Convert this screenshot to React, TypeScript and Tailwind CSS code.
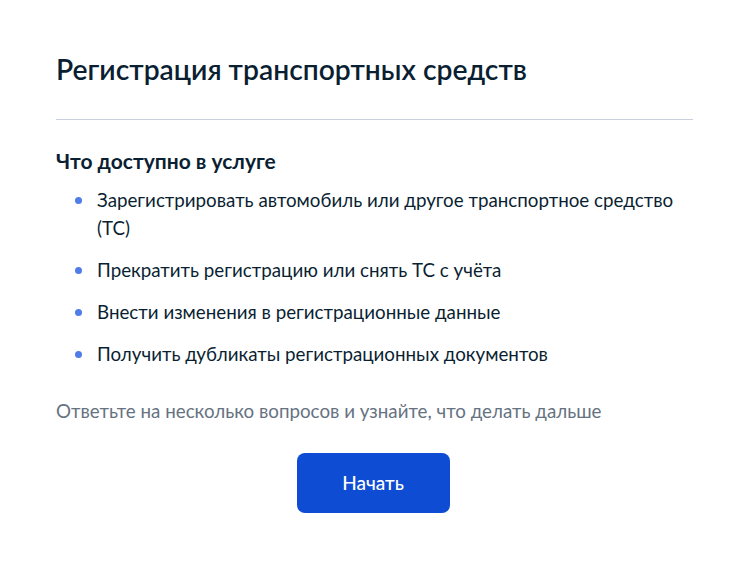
const items = [
  "Зарегистрировать автомобиль или другое транспортное средство (ТС)",
  "Прекратить регистрацию или снять ТС с учёта",
  "Внести изменения в регистрационные данные",
  "Получить дубликаты регистрационных документов",
];

export default function App() {
  return (
    <div className="min-h-[567px] w-[750px] bg-white font-['Lato',sans-serif] text-[#0b1f33]">
      <div className="px-[56px] pt-[51px]">
        {/* TITLE */}
        <h1 className="text-[28.25px] font-semibold leading-[36px]">
          Регистрация транспортных средств
        </h1>
        <div className="mt-[32px] h-px w-[637px] bg-[#c9d2dc]"></div>

        {/* SERVICES */}
        <h2 className="mt-[27px] text-[21px] font-bold leading-[28px]">
          Что доступно в услуге
        </h2>
        <ul className="mt-[11px] flex flex-col gap-[14px] pl-[19px]">
          {items.map((item) => (
            <li key={item} className="flex gap-[15px] text-[18.75px] leading-[28px]">
              <span className="mt-[11px] size-[7px] shrink-0 rounded-full bg-[#4f7ce8]"></span>
              <span className="max-w-[596px]">{item}</span>
            </li>
          ))}
        </ul>

        <p className="mt-[29px] text-[18.75px] leading-[28px] text-[#66727f]">
          Ответьте на несколько вопросов и узнайте, что делать дальше
        </p>

        {/* FOOTER */}
        <div className="mt-[28px] flex justify-center pr-[4px]">
          <button className="h-[60px] w-[153px] rounded-[8px] bg-[#0d4cd3] text-[19px] font-medium text-white">
            Начать
          </button>
        </div>
      </div>
    </div>
  );
}
